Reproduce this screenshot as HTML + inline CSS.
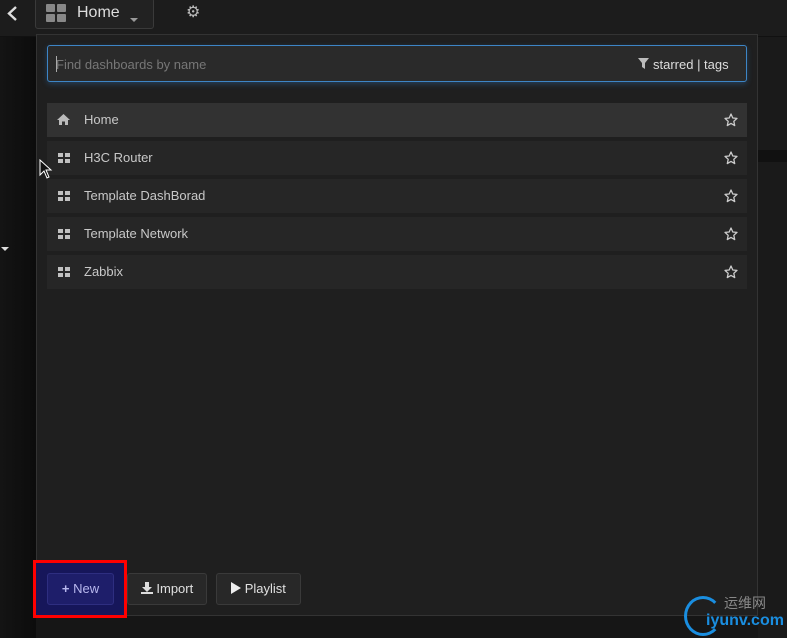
<!DOCTYPE html>
<html><head><meta charset="utf-8"><style>
*{margin:0;padding:0;box-sizing:border-box}
body{width:787px;height:638px;background:#161616;font-family:"Liberation Sans",sans-serif;position:relative;overflow:hidden;color:#d8d9da}
.abs{position:absolute}
.top{left:0;top:0;width:787px;height:37px;background:#1c1c1c;border-bottom:1px solid #111}
.left{left:0;top:37px;width:36px;height:601px;background:linear-gradient(90deg,#141414,#0c0c0c)}
.home{left:35px;top:-2px;width:119px;height:31px;border:1px solid #3a3a3a;border-radius:3px;background:#222}
.panel{left:36px;top:34px;width:722px;height:582px;background:#1f1f1f;border:1px solid #333}
.search{left:47px;top:45px;width:700px;height:37px;border:1px solid #3d85c6;border-radius:3px;background:#2a2a2a;box-shadow:0 2px 6px rgba(51,136,221,.3)}
.row{left:47px;width:700px;height:34px;background:#262626;font-size:13px;color:#c8c8c8;line-height:34px;padding-left:37px}
.row.h{background:#323232}
.gi{position:absolute;left:11px;top:12px;width:12px;height:10px}
.gi i{position:absolute;width:5px;height:4px;background:#c0c0c0}
.star{position:absolute;right:9px;top:10px}
.btn{top:573px;height:32px;border:1px solid #3a3a3a;border-radius:3px;background:#282828;font-size:13px;color:#e0e0e0;line-height:30px;text-align:center}
</style></head><body>
<div class="abs top"></div>
<div class="abs left"></div>
<div class="abs" style="left:758px;top:37px;width:29px;height:601px;background:#1a1a1a"></div>
<div class="abs" style="left:758px;top:150px;width:29px;height:12px;background:#111"></div>
<svg class="abs" style="left:6px;top:5px" width="12" height="17"><path d="M10 2 L3 8.5 L10 15" stroke="#ddd" stroke-width="2.4" fill="none"/></svg>
<div class="abs home"></div>
<div class="abs" style="left:46px;top:4px;width:21px;height:18px">
<i class="abs" style="left:0;top:0;width:9px;height:8px;background:#888;border-radius:1px"></i><i class="abs" style="left:11px;top:0;width:9px;height:8px;background:#888;border-radius:1px"></i><i class="abs" style="left:0;top:10px;width:9px;height:8px;background:#888;border-radius:1px"></i><i class="abs" style="left:11px;top:10px;width:9px;height:8px;background:#888;border-radius:1px"></i></div>
<div class="abs" style="left:77px;top:4px;font-size:16px;color:#ddd">Home</div>
<div class="abs" style="left:130px;top:18px;width:0;height:0;border:4px solid transparent;border-top-color:#999"></div>
<div class="abs" style="left:186px;top:2px;font-size:16px;color:#bbb">&#9881;</div>
<div class="abs" style="left:1px;top:247px;border:4px solid transparent;border-top-color:#ddd"></div>
<div class="abs panel"></div>
<div class="abs search"></div>
<div class="abs" style="left:56px;top:56px;width:1px;height:16px;background:#aaa"></div>
<div class="abs" style="left:56px;top:57px;font-size:13px;color:#777">Find dashboards by name</div>
<svg class="abs" style="left:638px;top:58px" width="12" height="12"><path d="M0 0 H11 L7 5 V11 L4 9 V5 Z" fill="#bbb"/></svg>
<div class="abs" style="left:653px;top:57px;font-size:13px;color:#ddd">starred | tags</div>
<svg style="display:none"><symbol id="st" viewBox="0 0 14 14"><path d="M7 1 L8.8 5 L13 5.4 L9.8 8.3 L10.7 12.6 L7 10.4 L3.3 12.6 L4.2 8.3 L1 5.4 L5.2 5 Z" fill="none" stroke="#ccc" stroke-width="1.3" stroke-linejoin="round"/></symbol></svg>
<div class="abs row h" style="top:103px"><svg class="abs" style="left:10px;top:11px" width="13" height="11"><path d="M6.5 0 L13 6 H11 V11 H8 V7.5 H5 V11 H2 V6 H0 Z" fill="#bbb"/></svg>Home<svg class="star" width="14" height="14"><use href="#st"/></svg></div>
<div class="abs row" style="top:141px"><span class="gi"><i style="left:0;top:0"></i><i style="left:7px;top:0"></i><i style="left:0;top:6px"></i><i style="left:7px;top:6px"></i></span>H3C Router<svg class="star" width="14" height="14"><use href="#st"/></svg></div>
<div class="abs row" style="top:179px"><span class="gi"><i style="left:0;top:0"></i><i style="left:7px;top:0"></i><i style="left:0;top:6px"></i><i style="left:7px;top:6px"></i></span>Template DashBorad<svg class="star" width="14" height="14"><use href="#st"/></svg></div>
<div class="abs row" style="top:217px"><span class="gi"><i style="left:0;top:0"></i><i style="left:7px;top:0"></i><i style="left:0;top:6px"></i><i style="left:7px;top:6px"></i></span>Template Network<svg class="star" width="14" height="14"><use href="#st"/></svg></div>
<div class="abs row" style="top:255px"><span class="gi"><i style="left:0;top:0"></i><i style="left:7px;top:0"></i><i style="left:0;top:6px"></i><i style="left:7px;top:6px"></i></span>Zabbix<svg class="star" width="14" height="14"><use href="#st"/></svg></div>
<svg class="abs" style="left:39px;top:159px" width="14" height="20"><path d="M1 1 L1 16 L5 12 L8 19 L10 18 L7 11 L12 11 Z" fill="#111" stroke="#fff" stroke-width="1"/></svg>
<div class="abs" style="left:33px;top:560px;width:94px;height:58px;background:#16165a;border:3px solid #f00"></div>
<div class="abs btn" style="left:47px;width:67px;background:#1e1e6a;border-color:#2e2e80;color:#b8b8ee"><b>+</b> New</div>
<div class="abs btn" style="left:127px;width:80px"><svg width="12" height="12" style="vertical-align:-1px"><path d="M4 0 H8 V5 H11 L6 10 L1 5 H4 Z M0 10 H12 V12 H0 Z" fill="#ddd"/></svg> Import</div>
<div class="abs btn" style="left:216px;width:85px"><svg width="10" height="12" style="vertical-align:-1px"><path d="M0 0 L10 6 L0 12 Z" fill="#eee"/></svg> Playlist</div>
<div class="abs" style="left:684px;top:596px;width:38px;height:40px;border:3px solid #1a8ee0;border-right-color:transparent;border-radius:50%"></div>
<div class="abs" style="left:724px;top:593px;font-size:14px;color:#888;font-family:'Noto Sans CJK SC',sans-serif">运维网</div>
<div class="abs" style="left:706px;top:612px;font-size:16px;font-weight:bold;color:#1a8ee0">iyunv.com</div>
</body></html>
